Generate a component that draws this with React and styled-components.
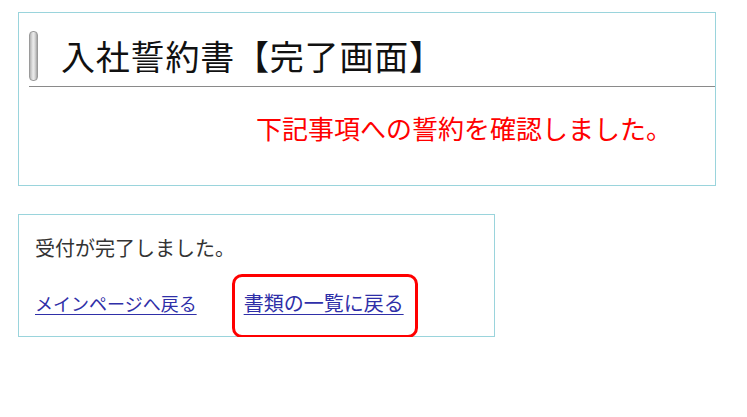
import React from "react";
import styled, { createGlobalStyle } from "styled-components";

const Global = createGlobalStyle`
  html, body { margin: 0; padding: 0; background: #fff; }
  body { font-family: "Noto Sans CJK JP", "Noto Sans", sans-serif; }
`;

const Page = styled.div`
  padding: 12px 0 0 18px;
  display: flex;
  flex-direction: column;
  align-items: flex-start;
  gap: 28px;
`;

const Panel = styled.section`
  box-sizing: border-box;
  width: ${(p) => p.$width}px;
  border: 1px solid #9ad4dc;
  position: relative;
`;

const TopPanel = styled(Panel)`
  height: 174px;
  padding: 18px 0 0 10px;
`;

const Heading = styled.h1`
  margin: 0;
  display: flex;
  align-items: center;
  gap: 23px;
  padding-bottom: 5px;
  border-bottom: 1px solid #8a8a8a;
  font-weight: normal;
`;

const Bar = styled.span`
  width: 9px;
  height: 50px;
  border-radius: 4px;
  box-sizing: border-box;
  border: 1px solid #9a9a9a;
  background: linear-gradient(to right, #b4b4b4, #ececec 45%, #d8d8d8 70%, #a4a4a4);
`;

const Title = styled.span`
  font-size: 34px;
  line-height: 50px;
  letter-spacing: 0.8px;
  color: #111;
`;

const Notice = styled.p`
  margin: 23px 0 0 227px;
  font-size: 26px;
  line-height: 36px;
  color: #ff0000;
`;

const BottomPanel = styled(Panel)`
  height: 123px;
  padding: 18px 16px 0 16px;
`;

const Done = styled.p`
  margin: 0;
  font-size: 20px;
  line-height: 30px;
  color: #333;
`;

const Links = styled.div`
  margin-top: 25px;
  display: flex;
  gap: 47px;
`;

const Link = styled.a`
  font-size: ${(p) => p.$size}px;
  line-height: 30px;
  color: #2f2fa8;
  text-decoration: underline;
  text-decoration-thickness: 1px;
  text-underline-offset: 3px;
  cursor: pointer;
`;

const Highlight = styled.span`
  position: absolute;
  left: 213px;
  top: 59px;
  width: 186px;
  height: 64px;
  box-sizing: border-box;
  border: 3px solid #ff0000;
  border-radius: 10px;
  pointer-events: none;
`;

export default function App() {
  return (
    <>
      <Global />
      <Page>
        <TopPanel $width={698}>
          <Heading>
            <Bar />
            <Title>入社誓約書【完了画面】</Title>
          </Heading>
          <Notice>下記事項への誓約を確認しました。</Notice>
        </TopPanel>
        <BottomPanel $width={477}>
          <Done>受付が完了しました。</Done>
          <Links>
            <Link $size={18}>メインページへ戻る</Link>
            <Link $size={20}>書類の一覧に戻る</Link>
          </Links>
          <Highlight />
        </BottomPanel>
      </Page>
    </>
  );
}
